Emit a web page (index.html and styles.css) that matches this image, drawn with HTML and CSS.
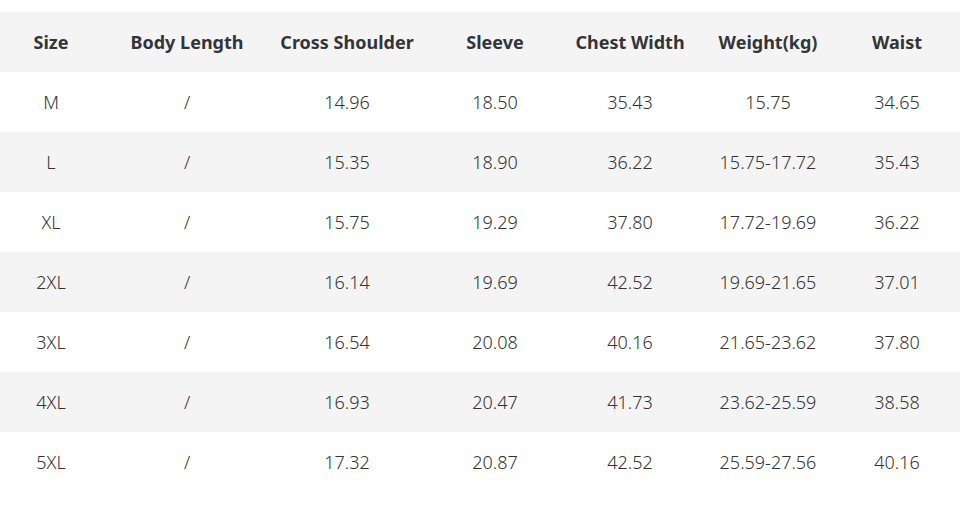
FILE: index.html
```html
<!DOCTYPE html>
<html>
<head>
<meta charset="utf-8">
<link rel="stylesheet" href="styles.css">
</head>
<body>
<table class="size-table">
  <colgroup>
    <col class="c1"><col class="c2"><col class="c3"><col class="c4"><col class="c5"><col class="c6"><col class="c7">
  </colgroup>
  <thead>
    <tr><th>Size</th><th>Body Length</th><th>Cross Shoulder</th><th>Sleeve</th><th>Chest Width</th><th>Weight(kg)</th><th>Waist</th></tr>
  </thead>
  <tbody>
    <tr><td>M</td><td>/</td><td>14.96</td><td>18.50</td><td>35.43</td><td>15.75</td><td>34.65</td></tr>
    <tr><td>L</td><td>/</td><td>15.35</td><td>18.90</td><td>36.22</td><td>15.75-17.72</td><td>35.43</td></tr>
    <tr><td>XL</td><td>/</td><td>15.75</td><td>19.29</td><td>37.80</td><td>17.72-19.69</td><td>36.22</td></tr>
    <tr><td>2XL</td><td>/</td><td>16.14</td><td>19.69</td><td>42.52</td><td>19.69-21.65</td><td>37.01</td></tr>
    <tr><td>3XL</td><td>/</td><td>16.54</td><td>20.08</td><td>40.16</td><td>21.65-23.62</td><td>37.80</td></tr>
    <tr><td>4XL</td><td>/</td><td>16.93</td><td>20.47</td><td>41.73</td><td>23.62-25.59</td><td>38.58</td></tr>
    <tr><td>5XL</td><td>/</td><td>17.32</td><td>20.87</td><td>42.52</td><td>25.59-27.56</td><td>40.16</td></tr>
  </tbody>
</table>
</body>
</html>
```
FILE: styles.css
```css
html, body {
  margin: 0;
  padding: 0;
  background: #fff;
}
body {
  padding-top: 12px;
  font-family: "Noto Sans", "Open Sans", sans-serif;
}
.size-table {
  width: 960px;
  table-layout: fixed;
  border-collapse: collapse;
  border-spacing: 0;
}
.c1 { width: 102px; }
.c2 { width: 170px; }
.c3 { width: 150px; }
.c4 { width: 146px; }
.c5 { width: 124px; }
.c6 { width: 152px; }
.c7 { width: 116px; }
.size-table th,
.size-table td {
  height: 60px;
  padding: 0;
  text-align: center;
  vertical-align: middle;
  font-size: 18px;
  white-space: nowrap;
}
.size-table th:last-child,
.size-table td:last-child {
  padding-right: 10px;
}
.size-table th {
  font-weight: 700;
  color: #32343a;
  background: #f4f4f4;
}
.size-table td {
  font-weight: 300;
  color: #333;
}
.size-table tbody tr:nth-child(even) td {
  background: #f4f4f4;
}
```
